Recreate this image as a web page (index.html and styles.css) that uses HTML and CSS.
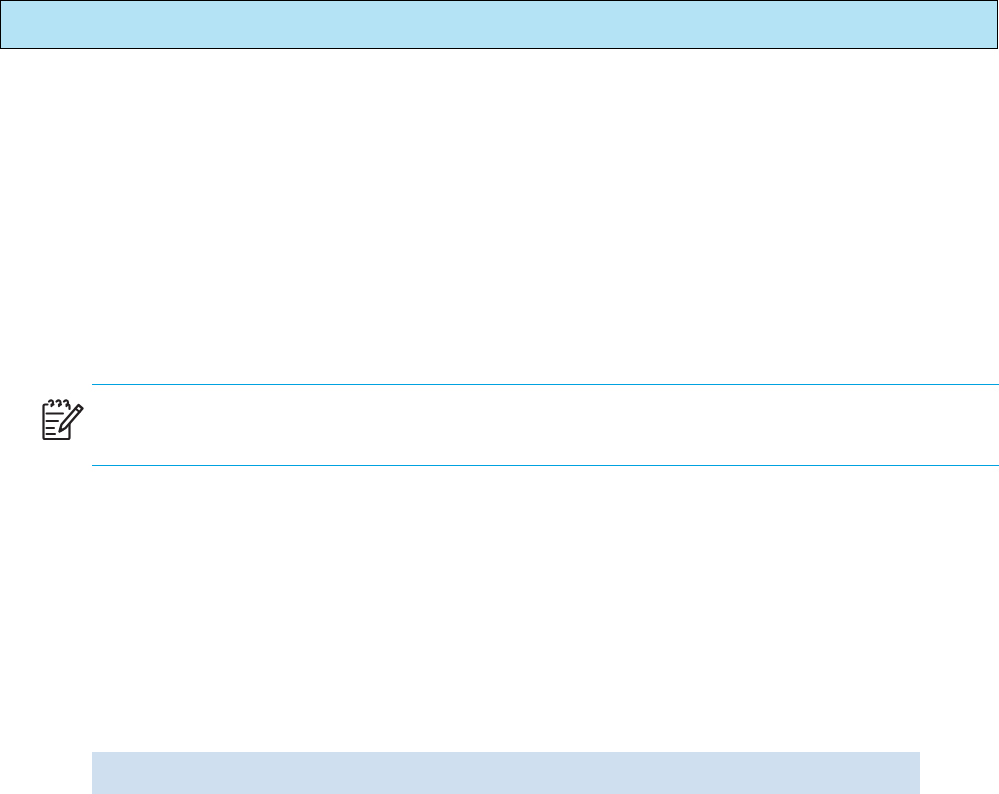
FILE: index.html
```html
<!DOCTYPE html>
<html lang="en">
<head>
<meta charset="utf-8">
<title>Note</title>
<link rel="stylesheet" href="styles.css">
</head>
<body>
<header class="banner"></header>
<section class="note">
  <div class="note-icon">
    <svg width="48" height="48" viewBox="0 0 48 48" fill="none" stroke="#231f20" stroke-width="2.2" stroke-linecap="round" stroke-linejoin="round">
      <path d="M9.500 9.500H7Q5.500 9.500 5.500 11V42.500Q5.500 44 7 44H30Q31.500 44 31.500 42.500V25"/>
      <path d="M13.500 9.500h2M21 9.500h2M28.500 9.500h1.500Q31.500 9.500 31.500 11.500V14"/>
      <path d="M11 6.500c2-1.800 4-1.300 4 1s-.5 3-1.500 3.500"/>
      <path d="M18.500 6.500c2-1.800 4-1.300 4 1s-.5 3-1.500 3.500"/>
      <path d="M26 6.500c2-1.800 4-1.300 4 1s-.5 3-1.500 3.500"/>
      <path d="M8.500 18.500H25M8.500 26H20M8.500 33H16M8.500 39H17" stroke-width="2"/>
      <path d="M40.500 10 44.500 13.500 27.500 33 21.500 36.500 23.500 29.500Z" fill="#fff" stroke-width="2.400"/>
      <path d="M37.500 13.500 41.500 17" stroke-width="2"/>
      <path d="M21.500 36.500 22.500 33 25 35Z" fill="#231f20" stroke-width="1.400"/>
    </svg>
  </div>
  <div class="note-body"></div>
</section>
<div class="footer-bar"></div>
</body>
</html>
```
FILE: styles.css
```css
html, body {
  margin: 0;
  padding: 0;
  background: #fff;
}
body {
  height: 794px;
  overflow: hidden;
  font-family: "Liberation Sans", Arial, sans-serif;
}
.banner {
  box-sizing: border-box;
  height: 49px;
  margin-right: 1px;
  background: #b3e3f5;
  border: 1px solid #000;
}
.note {
  display: flex;
  margin-top: 335px;
}
.note-icon {
  box-sizing: border-box;
  width: 92px;
  padding: 11px 0 0 38px;
}
.note-icon svg {
  display: block;
}
.note-body {
  flex: 1;
  box-sizing: border-box;
  height: 82px;
  border-top: 1px solid #00a3e0;
  border-bottom: 1px solid #00a3e0;
}
.footer-bar {
  width: 828px;
  height: 42px;
  margin: 286px 0 0 92px;
  background: #cfdfef;
}
```
